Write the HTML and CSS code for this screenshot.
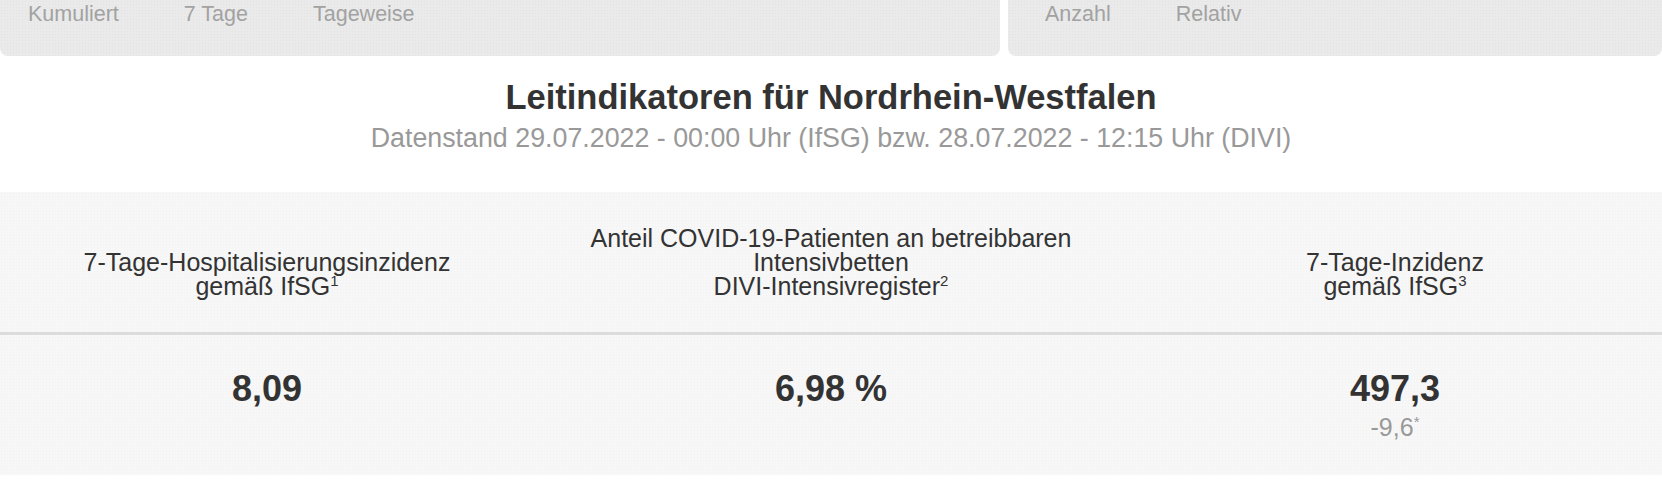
FILE: index.html
```html
<!DOCTYPE html>
<html lang="de">

<head>
    <meta charset="UTF-8">
    <meta name="viewport" content="width=device-width, initial-scale=1.0">
    <title>Leitindikatoren NRW</title>
    <link rel="stylesheet" href="styles.css">
</head>

<body>
    <!-- Umschalter oben -->
    <div class="tabs">
        <div class="tab-group tab-group-main">
            <span class="tab">Kumuliert</span>
            <span class="tab">7 Tage</span>
            <span class="tab">Tageweise</span>
        </div>
        <div class="tab-group tab-group-side">
            <span class="tab">Anzahl</span>
            <span class="tab">Relativ</span>
        </div>
    </div>

    <div class="heading">
        <h2>Leitindikatoren für Nordrhein-Westfalen</h2>
        <div class="subtitle">Datenstand 29.07.2022 - 00:00 Uhr (IfSG) bzw. 28.07.2022 - 12:15 Uhr (DIVI)</div>
    </div>

    <!-- Indikatoren -->
    <div class="indicators">
        <div class="indicator-head">
            <div>7-Tage-Hospitalisierungsinzidenz<br>gemäß IfSG<sup>1</sup></div>
        </div>
        <div class="indicator-head">
            <div>Anteil COVID-19-Patienten an betreibbaren<br>Intensivbetten<br>DIVI-Intensivregister<sup>2</sup></div>
        </div>
        <div class="indicator-head">
            <div>7-Tage-Inzidenz<br>gemäß IfSG<sup>3</sup></div>
        </div>

        <div class="indicator-value">
            <div class="value">8,09</div>
        </div>
        <div class="indicator-value">
            <div class="value">6,98 %</div>
        </div>
        <div class="indicator-value">
            <div class="value">497,3</div>
            <div class="change">-9,6<sup>*</sup></div>
        </div>
    </div>
</body>

</html>
```

FILE: styles.css
```css
body {
    font-family: "Liberation Sans", Arial, sans-serif;
    background-color: #fff;
    color: #333;
    margin: 0;
    padding: 0;
}

.tabs {
    display: flex;
    gap: 8px;
}

.tab-group {
    display: flex;
    gap: 65px;
    height: 56px;
    padding-top: 2px;
    box-sizing: border-box;
    background-color: #eaeaea;
    background-image: radial-gradient(circle, rgba(0, 0, 0, 0.035) 0.8px, transparent 1px);
    background-size: 3px 3px;
    border-radius: 0 0 8px 8px;
}

.tab-group-main {
    width: 1000px;
    padding-left: 28px;
}

.tab-group-side {
    flex: 1;
    padding-left: 37px;
}

.tab {
    font-size: 21.5px;
    line-height: 24px;
    color: #a2a2a2;
}

.heading {
    text-align: center;
    padding-top: 21px;
    padding-bottom: 38px;
}

h2 {
    margin: 0;
    font-size: 34.5px;
    line-height: 40px;
    font-weight: bold;
    color: #333;
}

.subtitle {
    margin-top: 5px;
    font-size: 26.8px;
    line-height: 32px;
    color: #999;
}

.indicators {
    display: grid;
    grid-template-columns: 1fr 594px 1fr;
    background-color: #f7f7f7;
    background-image: radial-gradient(circle, rgba(0, 0, 0, 0.025) 0.8px, transparent 1px);
    background-size: 3px 3px;
}

/* Kopfzeilen stehen unten buendig, wie in einer Tabelle mit vertical-align: bottom */
.indicator-head {
    height: 143px;
    box-sizing: border-box;
    display: flex;
    align-items: flex-end;
    justify-content: center;
    padding-bottom: 34px;
    text-align: center;
    font-size: 25px;
    line-height: 24px;
    color: #333;
    border-bottom: 3px solid #dcdcdc;
}

.indicator-head sup,
.change sup {
    font-size: 0.6em;
    line-height: 0;
}

.indicator-value {
    height: 140px;
    box-sizing: border-box;
    padding-top: 30px;
    text-align: center;
}

.value {
    font-size: 36px;
    line-height: 48px;
    font-weight: bold;
    color: #333;
}

.change {
    font-size: 25px;
    line-height: 28px;
    color: #999;
}
```
